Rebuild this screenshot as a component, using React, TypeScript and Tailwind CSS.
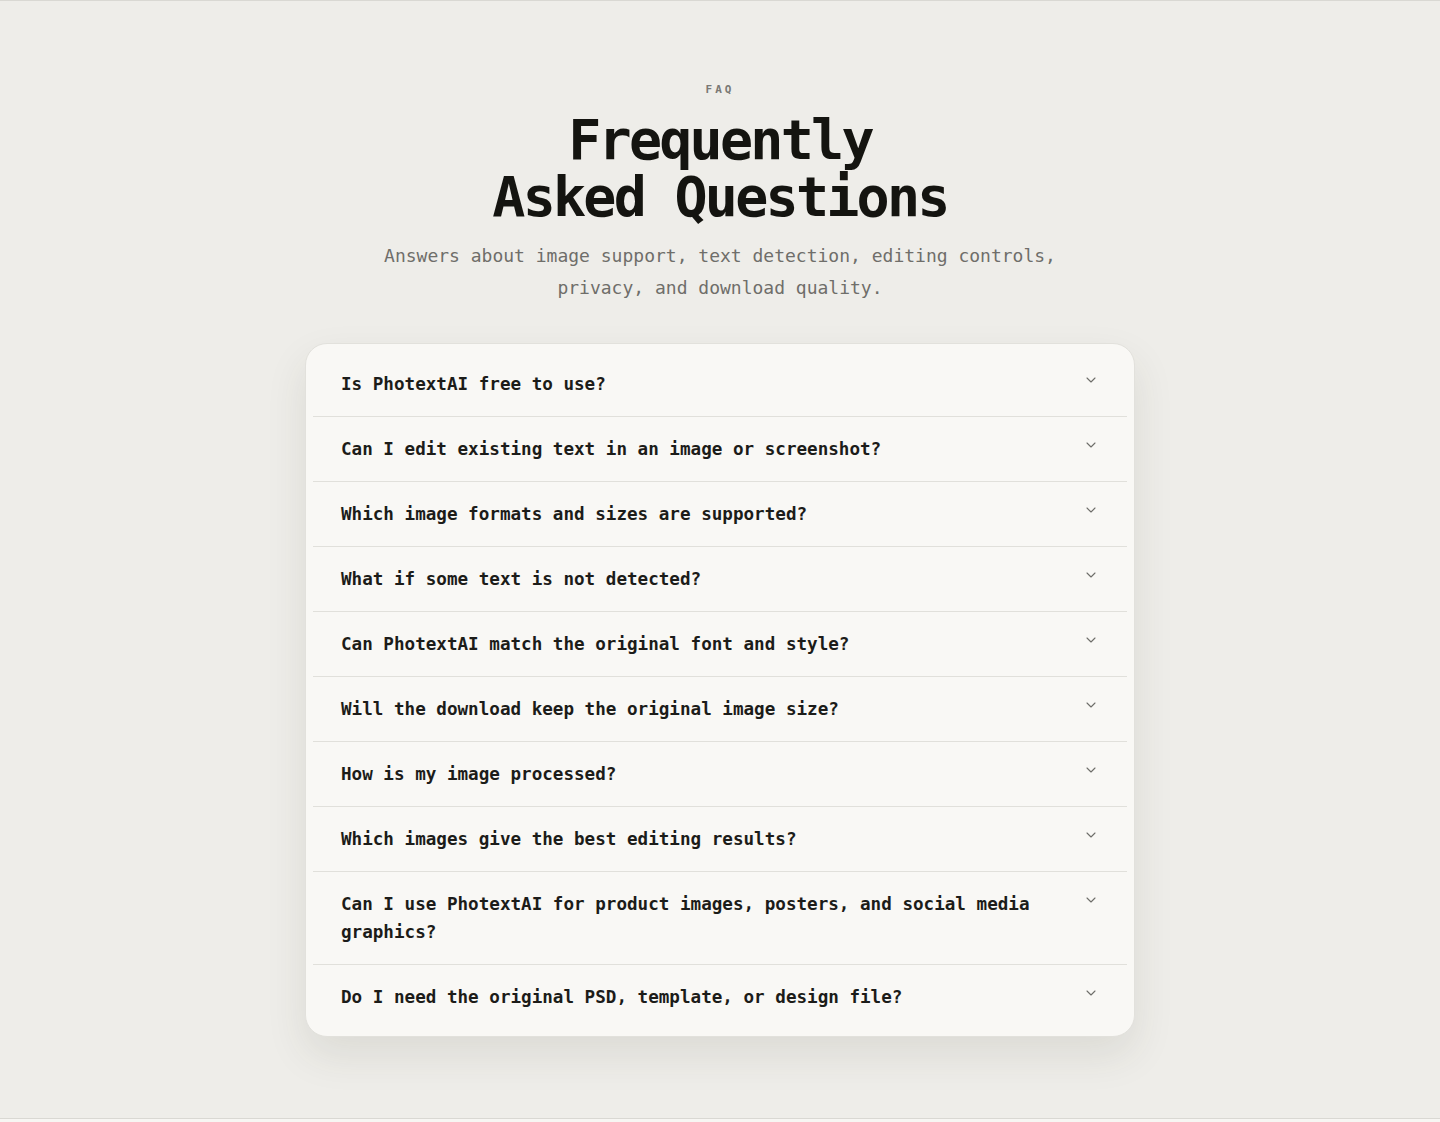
import { ChevronDown } from "lucide-react";

const questions = [
  "Is PhotextAI free to use?",
  "Can I edit existing text in an image or screenshot?",
  "Which image formats and sizes are supported?",
  "What if some text is not detected?",
  "Can PhotextAI match the original font and style?",
  "Will the download keep the original image size?",
  "How is my image processed?",
  "Which images give the best editing results?",
  "Can I use PhotextAI for product images, posters, and social media graphics?",
  "Do I need the original PSD, template, or design file?",
];

export default function App() {
  return (
    <div className="min-h-screen bg-[#f7f6f3] font-['DejaVu_Sans_Mono',monospace]">
      <section className="h-[1119px] border-y border-[#d9d8d3] bg-[#eeede9] pt-[81px]">
        <div className="flex flex-col items-center text-center">
          <p className="text-[11px] font-bold uppercase tracking-[0.28em] text-[#7a7975]">FAQ</p>
          <h2 className="mt-[13px] text-[55px] font-bold leading-[57px] tracking-[-0.05em] text-[#141410]">
            Frequently
            <br />
            Asked Questions
          </h2>
          <p className="mt-[14px] max-w-[700px] text-[18px] leading-[32px] text-[#6f6e6a]">
            Answers about image support, text detection, editing controls, privacy, and download quality.
          </p>
        </div>

        <div className="mx-auto mt-[39px] w-[830px] rounded-[22px] border border-[#e2e1dc] bg-[#f9f8f5] px-[7px] pt-[8px] pb-[7px] shadow-[0_18px_40px_rgba(60,55,40,0.10)]">
          {questions.map((q, i) => (
            <div
              key={q}
              className={`flex items-start justify-between gap-6 py-[18px] pl-[28px] pr-[28px] ${
                i < questions.length - 1 ? "border-b border-[#e1e0db]" : ""
              }`}
            >
              <span className="text-[17.6px] font-bold leading-[28px] text-[#1c1c19]">{q}</span>
              <ChevronDown className="mt-[2px] h-[16px] w-[16px] shrink-0 text-[#6e6d69]" strokeWidth={1.6} />
            </div>
          ))}
        </div>
      </section>
    </div>
  );
}
